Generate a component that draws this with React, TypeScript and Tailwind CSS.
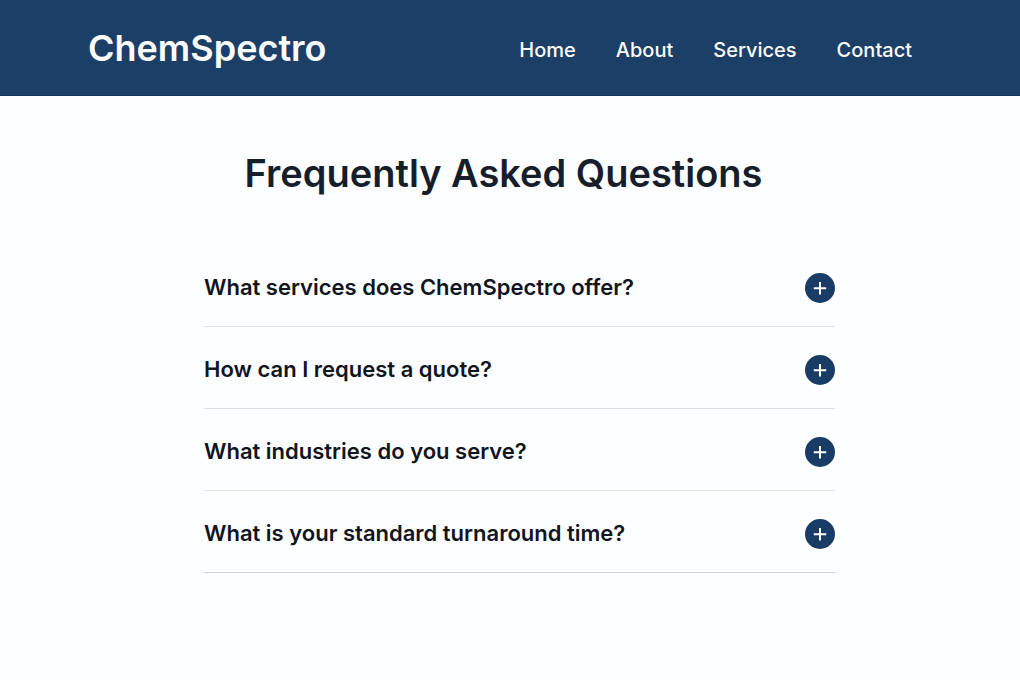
import { useState } from "react";

const links = ["Home", "About", "Services", "Contact"];

const questions = [
  "What services does ChemSpectro offer?",
  "How can I request a quote?",
  "What industries do you serve?",
  "What is your standard turnaround time?",
];

function PlusIcon() {
  return (
    <svg viewBox="0 0 30 30" className="size-[30px] shrink-0" aria-hidden="true">
      <circle cx="15" cy="15" r="15" fill="#193c66" />
      <path d="M15 9v12.4M8.8 15.2h12.4" stroke="#fff" strokeWidth="2" />
    </svg>
  );
}

export default function App() {
  const [selected, setSelected] = useState<string | null>(null);

  return (
    <div className="min-h-screen bg-[#fdfeff] font-['Inter',sans-serif] text-[#171e2b]">
      <header className="border-b border-[#16345f] bg-[#1c3f67] text-[#fcfcfe]">
        <div className="mx-auto flex h-[95px] max-w-5xl items-center justify-between pr-[108px] pl-[88px]">
          <a href="#" className="text-[36px] leading-none font-semibold">
            ChemSpectro
          </a>
          <nav className="flex gap-10 pt-1 text-xl font-medium">
            {links.map((link) => (
              <a key={link} href={`#${link.toLowerCase()}`}>
                {link}
              </a>
            ))}
          </nav>
        </div>
      </header>
      <main className="mx-auto max-w-5xl pr-[185px] pl-[204px]">
        <h1 className="pt-[53px] pr-8 text-center text-[38px] leading-[48px] font-semibold">
          Frequently Asked Questions
        </h1>
        <ul className="pt-12">
          {questions.map((question) => (
            <li key={question} className="border-b border-[#dfe3e9] last:border-[#cdd3dc]">
              <button
                type="button"
                onClick={() => setSelected(question)}
                aria-pressed={selected === question}
                className="flex h-[81px] w-full items-center justify-between pt-1 text-left text-[22px] font-semibold text-[#10151f]"
              >
                {question}
                <PlusIcon />
              </button>
            </li>
          ))}
        </ul>
      </main>
    </div>
  );
}
